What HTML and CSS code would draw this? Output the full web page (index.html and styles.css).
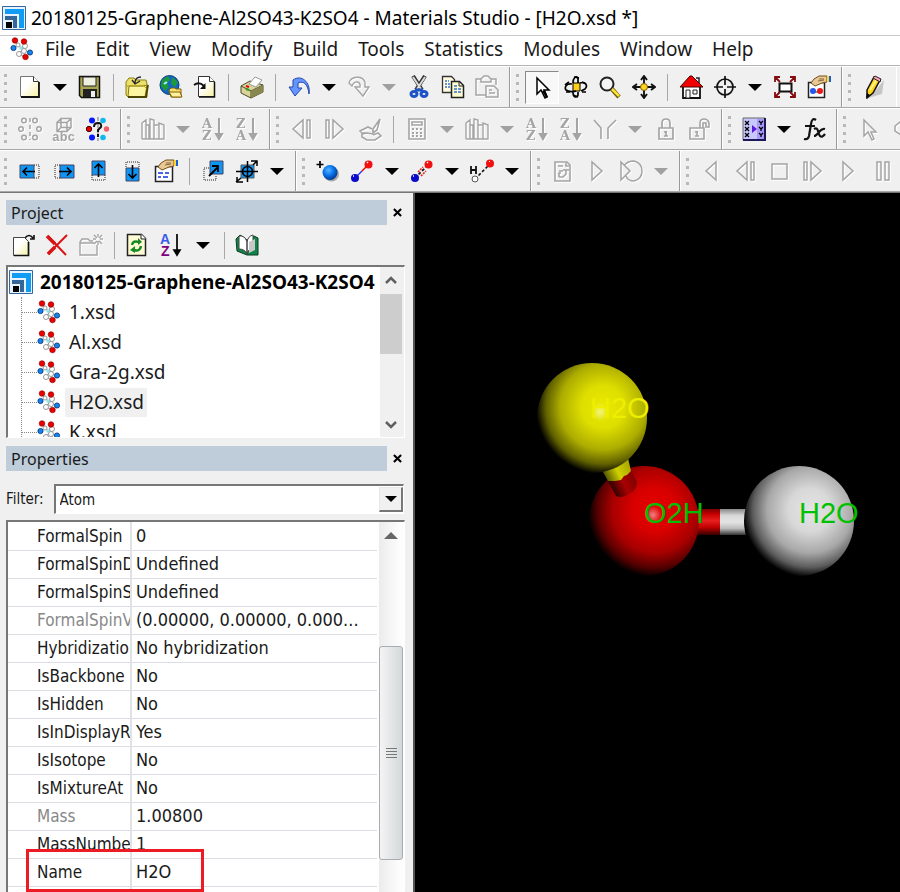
FILE: index.html
```html
<!DOCTYPE html>
<html lang="en">
<head>
<meta charset="utf-8">
<title>Materials Studio</title>
<link rel="stylesheet" href="styles.css">
</head>
<body>
<svg class="sprite" aria-hidden="true">
  <defs>
    <linearGradient id="paper" x1="0" y1="0" x2="1" y2="1"><stop offset=".4" stop-color="#fff"/><stop offset="1" stop-color="#f6f0a0"/></linearGradient>
    <radialGradient id="ball-blue" cx=".4" cy=".35" r=".65"><stop offset="0" stop-color="#5ab4ff"/><stop offset=".5" stop-color="#0a78f0"/><stop offset="1" stop-color="#003a90"/></radialGradient>
    <symbol id="logo" viewBox="0 0 24 24"><path d="M.5.5h23v23H.5z" fill="#e8f2fa" stroke="#33669c"/><path d="M3 3h19v19h-5V8H3z" fill="#109cf4"/><path d="M3 10h12v12h-4v-8H3z" fill="#336699"/><path d="M4 16h6v6H4z" fill="#000"/></symbol>
    <symbol id="molecule" viewBox="0 0 24 24"><path d="M5 4l3 4 5 4 6 4M14 5l-2 8-4 4 7 3" stroke="#999" fill="none"/><g fill="#fff" stroke="#999"><circle cx="8" cy="8" r="2"/><circle cx="15" cy="9" r="2.500"/><circle cx="14" cy="14" r="2.500"/><circle cx="9" cy="17" r="2.500"/></g><circle cx="11" cy="11" r="1.800" fill="#8ce4ee"/><g fill="#e80000" stroke="#800" stroke-width=".6"><circle cx="5" cy="3.500" r="2.800"/><circle cx="14" cy="4.500" r="2.800"/><circle cx="15.500" cy="20" r="2.800"/></g><g fill="#1484ee" stroke="#023070" stroke-width=".8"><circle cx="3.500" cy="11" r="2.600"/><circle cx="20" cy="15.500" r="2.600"/></g></symbol>
    <symbol id="new" viewBox="0 0 24 24"><path d="M2.500 1.500h13l5 5v15h-18z" fill="url(#paper)" stroke="#777"/><path d="M15.500 1.500v5h5" fill="#fff" stroke="#333"/><path d="M21 7v15H3" fill="none" stroke="#111" stroke-width="1.800"/></symbol>
    <symbol id="save" viewBox="0 0 24 24"><path d="M1.500 1.500h20v21h-18l-2-2z" fill="#a8a450" stroke="#111" stroke-width="1.500"/><path d="M5 2h13v9H5z" fill="#eef0e0" stroke="#222"/><path d="M5 14h14v8H5z" fill="#222"/><path d="M13 16h4v6h-4z" fill="#eee"/></symbol>
    <symbol id="open" viewBox="0 0 24 24"><path d="M1 7l3-4h5l2 2h10l1 4v13H3L1 20z" fill="#ece168" stroke="#8a7c10"/><path d="M4 11h14l4-1-2 12H3z" fill="#fbf4a0" stroke="#8a7c10"/><path d="M1 11h18l3 3" fill="none" stroke="#b0a020"/><path d="M3 22h18l2-12" fill="none" stroke="#4c4400" stroke-width="1.800"/><path d="M16 2q-6 0-6 6M7 5l3 4 5-3" fill="none" stroke="#222" stroke-width="1.300"/></symbol>
    <symbol id="globe" viewBox="0 0 24 24"><circle cx="10.500" cy="10" r="9.500" fill="#1464c8" stroke="#064070"/><path d="M3 5l6-4 2 4-3 3 2 4-4 4-4-5zM13 2l6 5-3 5-4-3zM9 15l4 0-2 4z" fill="#1c9a3a"/><path d="M5 9l3-2" stroke="#b8ecff" stroke-width="2"/><path d="M10 15l2-2h4l1 1h5v8H12z" fill="#f8e070" stroke="#806000"/><path d="M10 17h11l2 5H13z" fill="#fff0a0" stroke="#806000"/></symbol>
    <symbol id="import" viewBox="0 0 24 24"><path d="M5.500 1.500h11l5 5v15h-16z" fill="url(#paper)" stroke="#333"/><path d="M16.500 1.500v5h5" fill="#fff" stroke="#333"/><path d="M21.500 7v15H6" fill="none" stroke="#111" stroke-width="1.500"/><path d="M1 10q5-4 10 1" fill="none" stroke="#111" stroke-width="1.800"/><path d="M12.500 8v6H7z" fill="#111"/></symbol>
    <symbol id="print" viewBox="0 0 24 24"><path d="M1 11l9-5 13 4v7l-12 6-10-5z" fill="#d8d39a" stroke="#4e4b25"/><path d="M1 11l10 5 12-6M11 16v7" fill="none" stroke="#4e4b25"/><path d="M11 16l12-6v7l-12 6z" fill="#8a8650"/><path d="M9 9l6-7 7 3-6 7z" fill="#fff" stroke="#999"/><path d="M6 11l3 1" stroke="#e00" stroke-width="2"/><path d="M6 14l3 1" stroke="#17a317" stroke-width="2"/></symbol>
    <symbol id="undo" viewBox="0 0 24 24"><path d="M22 19C24 7 14-1 6 5v7H2l6 9 7-8h-4V8c6-3 10 2 11 11z" fill="#6596ff" stroke="#2348ad"/></symbol>
    <symbol id="redo" viewBox="0 0 24 24"><path d="M2 8C4 1 15 0 18 7v5h4l-6 9-8-9h5C14 7 8 4 5 11z" fill="none" stroke="#a4a4a4" stroke-width="1.400"/></symbol>
    <symbol id="cut" viewBox="0 0 24 24"><path d="M6 1l9 14M18 1L9 15" stroke="#333" stroke-width="4"/><path d="M6 2l8 12M18 2l-8 12" stroke="#ddd" stroke-width="2"/><g fill="none" stroke="#1c54c8" stroke-width="3"><ellipse cx="7" cy="19" rx="3" ry="2.500"/><ellipse cx="17" cy="19" rx="3" ry="2.500"/><path d="M8 15h8"/></g></symbol>
    <symbol id="copy" viewBox="0 0 24 24"><path d="M1.500 1.500h9l3 3v13h-12z" fill="#fffbe0" stroke="#333" stroke-width="1.300"/><path d="M4 6h4M4 9h6M4 12h6" stroke="#3570d0" stroke-width="1.500" stroke-dasharray="2 1"/><path d="M10.500 6.500h8l4 4v12h-12z" fill="#fffbd0" stroke="#222" stroke-width="1.500"/><path d="M13 11h4M13 14h7M13 17h7" stroke="#3570d0" stroke-width="1.500" stroke-dasharray="3 1"/><path d="M18 7v4h4" fill="none" stroke="#222"/></symbol>
    <symbol id="paste" viewBox="0 0 24 24"><g fill="none" stroke="#a4a4a4" stroke-width="1.500"><path d="M11 20H1V4h5l3-3h4l3 3h5v6M6 3v4h10V3M11 11h8l4 4v7H11zM14 15h3M14 18h6"/></g></symbol>
    <symbol id="pointer" viewBox="0 0 24 24"><path d="M7 3v16l4-4 4 8 2-1-3-7h5z" fill="#fff" stroke="#000" stroke-width="1.500"/><path d="M12 16l4 7 2-1-3-7z" fill="#000"/></symbol>
    <symbol id="rotate" viewBox="0 0 24 24"><path d="M9 8h7v8H9z" fill="#ffce18" stroke="#000"/><g fill="none" stroke="#000" stroke-width="1.700"><path d="M9 8c0-5 3-8 5-5v5M9 17c0 6 4 6 5 3v-3M8 9c-5-1-8 3-6 6 3 2 8 2 10 1M16 8c6-2 8 3 5 6l-4 2"/><path d="M1 10l4-3M10 2l5 1M22 9l-4-2M9 20l5 2M2 17h4M18 17h4"/></g></symbol>
    <symbol id="zoom" viewBox="0 0 24 24"><circle cx="9" cy="9" r="6.500" fill="#f4f4f4" stroke="#222" stroke-width="2"/><path d="M14 14l7 8" stroke="#6c5c00" stroke-width="4.500"/><path d="M14 14l7 7" stroke="#ffe23c" stroke-width="2.500"/></symbol>
    <symbol id="move" viewBox="0 0 24 24"><path d="M12 1v22M1 12h22M9 5l3-4 3 4M9 19l3 4 3-4M5 9l-4 3 4 3M19 9l4 3-4 3" fill="none" stroke="#111" stroke-width="1.900"/><circle cx="12" cy="12" r="3.500" fill="#ffd41c" stroke="#7c5b00"/></symbol>
    <symbol id="home" viewBox="0 0 24 24"><path d="M4 10h17v13H4z" fill="#fff" stroke="#111" stroke-width="1.800"/><path d="M1 12L11 1h2l11 11z" fill="#f00000" stroke="#400"/><path d="M17 3h3v5" stroke="#222" fill="none" stroke-width="1.500"/><path d="M7 15h4v8H7zM14 15h4v4h-4z" fill="#fff" stroke="#222"/></symbol>
    <symbol id="target" viewBox="0 0 24 24"><circle cx="12" cy="12" r="8" fill="none" stroke="#111" stroke-width="1.700"/><path d="M12 1v9M12 14v9M1 12h9M14 12h9" stroke="#111" stroke-width="1.700"/></symbol>
    <symbol id="fit" viewBox="0 0 24 24"><path d="M6.500 8.500h12v8h-12z" fill="#fff" stroke="#111" stroke-width="2"/><path d="M2 7V2h5M2 2l5 5M17 2h5v5M22 2l-5 5M2 17v5h5M2 22l5-5M17 22h5v-5M22 22l-5-5" fill="none" stroke="#840c10" stroke-width="1.800"/></symbol>
    <symbol id="hand" viewBox="0 0 24 24"><path d="M4 8l3-4 5-3h8v6l-5 1-7 3z" fill="#e8c894" stroke="#75501c"/><path d="M12 4l5 0M11 6l6-1" stroke="#8d6a38"/><path d="M20 1h2v6h-2z" fill="#ffd52e"/><path d="M22 1h2v6h-2z" fill="#1560e0"/></symbol>
    <symbol id="display-style" viewBox="0 0 24 24"><path d="M1.500 7.500h16v15h-16z" fill="#fff" stroke="#222" stroke-width="1.500"/><path d="M5 17h9" stroke="#222"/><circle cx="6" cy="16" r="3" fill="#2458e8"/><circle cx="13" cy="16" r="3" fill="#e81818"/><use href="#hand"/></symbol>
    <symbol id="props" viewBox="0 0 24 24"><path d="M1.500 7.500h17v15h-17z" fill="#fff" stroke="#222" stroke-width="1.500"/><path d="M4 14h5M11 14h4M4 18h3M9 18h5" stroke="#1030e0" stroke-width="1.700"/><use href="#hand"/></symbol>
    <symbol id="pencil" viewBox="0 0 24 24"><path d="M6 23l3-2L22 5l-2 14z" fill="#aaa" opacity=".6"/><path d="M5 15L12 2l6 3-7 13-6 5z" fill="#ffd51c" stroke="#111" stroke-width="1.500"/><path d="M8 15l7-11" stroke="#fff38a" stroke-width="2"/><path d="M11 3l2-2 6 3-1 3z" fill="#ff9cc0" stroke="#222"/><path d="M4 23l1-5 3 2z" fill="#000"/></symbol>
    <symbol id="atoms" viewBox="0 0 24 24"><g fill="none" stroke="#a4a4a4" stroke-width="1.500"><circle cx="6" cy="3.500" r="2.300"/><circle cx="17" cy="3.500" r="2.300"/><circle cx="3" cy="12" r="2.300"/><circle cx="21" cy="12" r="2.300"/><circle cx="6" cy="20.500" r="2.300"/><circle cx="17" cy="20.500" r="2.300"/><path d="M12 1v22" stroke-dasharray="4 3"/></g></symbol>
    <symbol id="box-abc" viewBox="0 0 24 24"><g fill="none" stroke="#a4a4a4" stroke-width="1.500"><path d="M5 5.500h10v9H5zM9 1.500h10v9H9zM5 5.500l4-4M15 5.500l4-4M15 14.500l4-4M5 14.500l4-4"/></g><text x="0" y="24" font-family="Liberation Mono, monospace" font-size="13" font-weight="700" fill="#a4a4a4">abc</text></symbol>
    <symbol id="atoms-ask" viewBox="0 0 24 24"><path d="M12 0v24" stroke="#777" stroke-dasharray="4 3"/><g fill="#0818ff"><circle cx="6" cy="3.500" r="3"/><circle cx="6" cy="20.500" r="3"/></g><g fill="#10b8f0"><circle cx="17" cy="3.500" r="2.800"/><circle cx="17" cy="20.500" r="2.800"/></g><circle cx="3" cy="12" r="2.700" fill="#e80000" stroke="#400"/><circle cx="20.500" cy="12" r="2.700" fill="#f06068"/><path d="M8 10q0-4 4-4t3 4l-3 3v2M12 17v3" fill="none" stroke="#111" stroke-width="2"/></symbol>
    <symbol id="chart" viewBox="0 0 24 24"><path d="M1 22V6l4-3v19M5 8h3v14M9 22V2l4 1v19M9 22V9M13 8h5v14M18 22V6l5 2v14H1" fill="none" stroke="#a4a4a4" stroke-width="1.400"/></symbol>
    <symbol id="sort-az" viewBox="0 0 24 24"><g font-family="DejaVu Serif, serif" font-size="13" font-weight="700"><text class="letter" x="1" y="11">A</text><text class="letter" x="1" y="23">Z</text></g><path class="shaft" d="M18 1v20M15 17l3 5 3-5z"/></symbol>
    <symbol id="sort-za" viewBox="0 0 24 24"><g font-family="DejaVu Serif, serif" font-size="13" font-weight="700"><text class="letter" x="1" y="11">Z</text><text class="letter" x="1" y="23">A</text></g><path class="shaft" d="M18 1v20M15 17l3 5 3-5z"/></symbol>
    <symbol id="sort-tree" viewBox="0 0 24 24"><g font-family="Liberation Sans, sans-serif" font-size="14" font-weight="700"><text x="1" y="11" fill="#3c5ce8">A</text><text x="2" y="23" fill="#800080">Z</text></g><path d="M18 1v20M15 17l3 5 3-5z" fill="#000" stroke="#000" stroke-width="1.700"/></symbol>
    <symbol id="step-back" viewBox="0 0 24 24"><path d="M13 3v18L3 12zM17 3h3v18h-3z" fill="none" stroke="#a4a4a4" stroke-width="1.500"/></symbol>
    <symbol id="step-fwd" viewBox="0 0 24 24"><path d="M9 3v18l10-9zM2 3h3v18H2z" fill="none" stroke="#a4a4a4" stroke-width="1.500"/></symbol>
    <symbol id="play" viewBox="0 0 24 24"><path d="M7 3v18l10-9z" fill="none" stroke="#a4a4a4" stroke-width="1.500"/></symbol>
    <symbol id="play-back" viewBox="0 0 24 24"><path d="M16 3v18L6 12z" fill="none" stroke="#a4a4a4" stroke-width="1.500"/></symbol>
    <symbol id="stop" viewBox="0 0 24 24"><path d="M4 5h15v15H4z" fill="none" stroke="#a4a4a4" stroke-width="1.500"/></symbol>
    <symbol id="pause" viewBox="0 0 24 24"><path d="M7 3h4v18H7zM15 3h4v18h-4z" fill="none" stroke="#a4a4a4" stroke-width="1.500"/></symbol>
    <symbol id="sketch" viewBox="0 0 24 24"><path d="M22 2l-7 10v4l4-3 3-11zM14 12l-4-2-8 4 2 2h5l-5 1v3l5 3h8l6-4-3-3-5 2M9 16l6 1" fill="none" stroke="#a4a4a4" stroke-width="1.600"/></symbol>
    <symbol id="calc" viewBox="0 0 24 24"><path d="M4 2h16v20H4zM7 5h10v3H7z" fill="none" stroke="#a4a4a4" stroke-width="1.600"/><path d="M7 12h10M7 16h10M7 19h10" stroke="#a4a4a4" stroke-width="2" stroke-dasharray="2 2"/></symbol>
    <symbol id="fork" viewBox="0 0 24 24"><path d="M1 3l7 8v11M23 3l-8 8v11" fill="none" stroke="#a4a4a4" stroke-width="1.600"/></symbol>
    <symbol id="lock" viewBox="0 0 24 24"><path d="M6 11h14v11H6zM9 11V6q0-4 4-4t4 4v5M13 14v5M11 15h3M11 19h4" fill="none" stroke="#a4a4a4" stroke-width="1.700"/></symbol>
    <symbol id="unlock" viewBox="0 0 24 24"><path d="M3 11h14v11H3zM13 11V6q0-4 4-4t5 4v4h-3V6h-3v5M10 14v5M8 15h3M8 19h4" fill="none" stroke="#a4a4a4" stroke-width="1.600"/></symbol>
    <symbol id="matrix" viewBox="0 0 24 24"><path d="M1 1h22v22H1z" fill="#c8c8ff" stroke="#666"/><path d="M15 2h7v20h-7z" fill="#a898f8"/><path d="M1 23h22V1" fill="none" stroke="#1c1858" stroke-width="2"/><path d="M10 8v8l5-4z" fill="#5a18d8"/><path d="M3 4l4 4M7 4L3 8M3 10l4 4M7 10l-4 4M3 16l4 4M7 16l-4 4M17 4l2 2 2-2M19 6v2M17 10l2 2 2-2M19 12v2M17 16l2 2 2-2M19 18v2" stroke="#000" fill="none" stroke-width="1.300"/></symbol>
    <symbol id="fx" viewBox="0 0 24 24"><path d="M14 3q-4-3-5 4L7 19q-1 4-5 3M3 9h10" fill="none" stroke="#111" stroke-width="2.200"/><path d="M12 12q3-2 4 2t2 5q2 2 5-2M23 12q-3-1-6 3t-5 4" fill="none" stroke="#111" stroke-width="2.200"/></symbol>
    <symbol id="pointer-off" viewBox="0 0 24 24"><path d="M7 3v16l4-4 4 8 2-1-3-7h5z" fill="none" stroke="#a4a4a4" stroke-width="1.500"/></symbol>
    <symbol id="lasso" viewBox="0 0 24 24"><path d="M23 5H9l-5 4v5l6 4h13" fill="none" stroke="#a4a4a4" stroke-width="1.500"/></symbol>
    <symbol id="left" viewBox="0 0 24 24"><path d="M2 6h14v13H2z" fill="#0e96f5" stroke="#446"/><path d="M16 6h5v13h-5" fill="none" stroke="#222" stroke-dasharray="1 1"/><path d="M17 12.500H5M9 8.500l-4 4 4 4" fill="none" stroke="#000" stroke-width="1.600"/></symbol>
    <symbol id="right" viewBox="0 0 24 24"><path d="M8 6h14v13H8z" fill="#0e96f5" stroke="#446"/><path d="M8 6H3v13h5" fill="none" stroke="#222" stroke-dasharray="1 1"/><path d="M7 12.500h12M15 8.500l4 4-4 4" fill="none" stroke="#000" stroke-width="1.600"/></symbol>
    <symbol id="up" viewBox="0 0 24 24"><path d="M6 2h13v14H6z" fill="#0e96f5" stroke="#446"/><path d="M6 16v5h13v-5" fill="none" stroke="#222" stroke-dasharray="1 1"/><path d="M12.500 18V5M8.500 9l4-4 4 4" fill="none" stroke="#000" stroke-width="1.600"/></symbol>
    <symbol id="down" viewBox="0 0 24 24"><path d="M6 9h13v13H6z" fill="#0e96f5" stroke="#446"/><path d="M6 8V3h13v5" fill="none" stroke="#222" stroke-dasharray="1 1"/><path d="M12.500 6v13M8.500 15l4 4 4-4" fill="none" stroke="#000" stroke-width="1.600"/></symbol>
    <symbol id="expand" viewBox="0 0 24 24"><path d="M9 2h13v13H9z" fill="#0e96f5" stroke="#446"/><path d="M8 9H3v12h12v-5" fill="none" stroke="#222" stroke-dasharray="1 1"/><path d="M8 17l9-9M11 7h6v6" fill="none" stroke="#000" stroke-width="1.800"/></symbol>
    <symbol id="recenter" viewBox="0 0 24 24"><path d="M6 6h13v13H6z" fill="#0e96f5" stroke="#555"/><circle cx="12.500" cy="12.500" r="5" fill="none" stroke="#000" stroke-width="1.600"/><path d="M12.500 2v21M1 12.500h22M16 2h6v5M18 6l4-4M2 18v5h6M1 23l5-4" fill="none" stroke="#000" stroke-width="1.500"/></symbol>
    <symbol id="add-atom" viewBox="0 0 24 24"><circle cx="15.500" cy="15" r="7.500" fill="#888" opacity=".7"/><circle cx="14" cy="13.500" r="7.500" fill="url(#ball-blue)"/><path d="M4 2v7M.5 5.500h7" stroke="#000" stroke-width="1.700"/></symbol>
    <symbol id="bond" viewBox="0 0 24 24"><path d="M5 19l7-7" stroke="#33f" stroke-width="1.500"/><path d="M12 12l7-7" stroke="#e00" stroke-width="1.500"/><circle cx="5" cy="19" r="4" fill="#0a0ac8"/><circle cx="18.500" cy="5.500" r="4" fill="#f01010"/><path d="M17 4l1-1M3 17l1 0" stroke="#fff" stroke-width="1.500"/></symbol>
    <symbol id="bond-dash" viewBox="0 0 24 24"><path d="M5 19L19 5" stroke="#111" stroke-width="1.700" stroke-dasharray="3 2"/><path d="M8 13l5-5M11 17l5-5" stroke="#f02020" stroke-width="1.600" stroke-dasharray="2 1"/><circle cx="5" cy="19" r="4" fill="#0a0ac8"/><circle cx="18.500" cy="5.500" r="4" fill="#f01010"/><path d="M17 4l1-1M3 17l1 0" stroke="#fff" stroke-width="1.500"/></symbol>
    <symbol id="hydrogen" viewBox="0 0 24 24"><path d="M5 20L20 5" stroke="#111" stroke-width="1.600" stroke-dasharray="3 2"/><path d="M1 7v8M6 7v8M1 11h5" stroke="#111" stroke-width="1.800"/><circle cx="5" cy="20" r="3" fill="#fff" stroke="#555"/><circle cx="20" cy="4.500" r="4" fill="#f01010"/><path d="M19 3l1-1" stroke="#fff"/></symbol>
    <symbol id="script" viewBox="0 0 24 24"><path d="M4 3h12l3 3v16H4zM7 7h5M12 11h6M8 12h4M8 18v-4l2 0M15 11v4l-3 3h-4M15 4v3h3" fill="none" stroke="#a4a4a4" stroke-width="1.600"/></symbol>
    <symbol id="run-at" viewBox="0 0 24 24"><path d="M2 3v18l9-9zM5 7q3-5 10-5 8 2 8 10t-8 10q-6 0-8-5" fill="none" stroke="#a4a4a4" stroke-width="1.500"/></symbol>
    <symbol id="new-file" viewBox="0 0 24 24"><path d="M2.500 4.500h11l4 4v14h-15z" fill="url(#paper)" stroke="#444"/><path d="M17.500 9v13.500H3" fill="none" stroke="#111" stroke-width="1.700"/><path d="M14 5q4-5 8 0M23 2v4h-4" fill="none" stroke="#111" stroke-width="1.600"/></symbol>
    <symbol id="delete" viewBox="0 0 24 24"><path d="M3 3l18 19M22 2L3 21" stroke="#d81414" stroke-width="2"/><path d="M2 3l8 8M3 21l7-7" stroke="#d81414" stroke-width="3.500"/></symbol>
    <symbol id="new-folder" viewBox="0 0 24 24"><path d="M14 8h-3l-2-2H3L1 9v13h17V12M1 10h14M19 1v3M19 8v4M14 6h3M21 6h3M15 2l3 3M23 2l-3 3M15 11l3-3M23 11l-3-3" fill="none" stroke="#a4a4a4" stroke-width="1.400"/></symbol>
    <symbol id="refresh" viewBox="0 0 24 24"><path d="M2.500 1.500h14l4 4v17h-18z" fill="#fffbd4" stroke="#222" stroke-width="1.500"/><path d="M16 1v5h5" fill="#fff" stroke="#222"/><path d="M7 12q1-5 7-3M16 13q-1 6-7 4" fill="none" stroke="#178a26" stroke-width="2.500"/><path d="M13 5v7l4-3zM10 13v7l-5-3z" fill="#178a26"/></symbol>
    <symbol id="book" viewBox="0 0 24 24"><path d="M1 6l4-4 7 5 7-4 4 2v17H12L2 18z" fill="#12834a" stroke="#063d20"/><path d="M4 3q6-1 8 6v12q-2-5-8-5zM12 9q1-6 6-7v13q-5 1-6 6z" fill="#fff" stroke="#444"/><path d="M14 9l6-3v11l-6 3z" fill="#c8c8c8"/></symbol>
    <symbol id="close" viewBox="0 0 10 10"><path d="M1 1l8 8M9 1L1 9" stroke="#000" stroke-width="2.300"/></symbol>
    <symbol id="chev-up" viewBox="0 0 12 12"><path d="M1 8l5-5 5 5" fill="none" stroke="#606060" stroke-width="2.500"/></symbol>
    <symbol id="chev-down" viewBox="0 0 12 12"><path d="M1 4l5 5 5-5" fill="none" stroke="#606060" stroke-width="2.500"/></symbol>
  </defs>
</svg>

<header class="titlebar"><svg class="icon"><use href="#logo"/></svg><h1>20180125-Graphene-Al2SO43-K2SO4 - Materials Studio - [H2O.xsd *]</h1></header>

<nav class="menubar" aria-label="Main menu">
  <svg class="icon"><use href="#molecule"/></svg>
  <button>File</button><button>Edit</button><button>View</button><button>Modify</button><button>Build</button><button>Tools</button><button>Statistics</button><button>Modules</button><button>Window</button><button>Help</button>
</nav>

<div class="toolrow">
  <div class="toolbar" role="toolbar" aria-label="Standard">
    <i class="grip"></i>
    <button class="tool" aria-label="New"><svg class="icon"><use href="#new"/></svg></button><button class="drop" aria-label="New options"></button>
    <button class="tool" aria-label="Save"><svg class="icon"><use href="#save"/></svg></button><i class="sep"></i>
    <button class="tool" aria-label="Open"><svg class="icon"><use href="#open"/></svg></button>
    <button class="tool" aria-label="Open from web"><svg class="icon"><use href="#globe"/></svg></button>
    <button class="tool" aria-label="Import"><svg class="icon"><use href="#import"/></svg></button><i class="sep"></i>
    <button class="tool" aria-label="Print"><svg class="icon"><use href="#print"/></svg></button><i class="sep"></i>
    <button class="tool" aria-label="Undo"><svg class="icon"><use href="#undo"/></svg></button><button class="drop" aria-label="Undo list"></button>
    <button class="tool off" aria-label="Redo"><svg class="icon"><use href="#redo"/></svg></button><button class="drop off" aria-label="Redo list"></button>
    <button class="tool" aria-label="Cut"><svg class="icon"><use href="#cut"/></svg></button>
    <button class="tool" aria-label="Copy"><svg class="icon"><use href="#copy"/></svg></button>
    <button class="tool off" aria-label="Paste"><svg class="icon"><use href="#paste"/></svg></button>
  </div>
  <div class="toolbar" role="toolbar" aria-label="3D viewer">
    <i class="grip"></i>
    <button class="tool pressed" aria-label="Select"><svg class="icon"><use href="#pointer"/></svg></button>
    <button class="tool" aria-label="Rotate"><svg class="icon"><use href="#rotate"/></svg></button>
    <button class="tool" aria-label="Zoom"><svg class="icon"><use href="#zoom"/></svg></button>
    <button class="tool" aria-label="Translate"><svg class="icon"><use href="#move"/></svg></button><i class="sep"></i>
    <button class="tool" aria-label="Reset view"><svg class="icon"><use href="#home"/></svg></button>
    <button class="tool" aria-label="Center"><svg class="icon"><use href="#target"/></svg></button><button class="drop" aria-label="Center options"></button>
    <button class="tool" aria-label="Fit to view"><svg class="icon"><use href="#fit"/></svg></button>
    <button class="tool" aria-label="Display style"><svg class="icon"><use href="#display-style"/></svg></button>
  </div>
  <div class="toolbar" role="toolbar" aria-label="Sketch">
    <i class="grip"></i>
    <button class="tool" aria-label="Sketch atom"><svg class="icon"><use href="#pencil"/></svg></button>
  </div>
</div>

<div class="toolrow">
  <div class="toolbar" role="toolbar" aria-label="Symmetry">
    <i class="grip"></i>
    <button class="tool off" aria-label="Find symmetry"><svg class="icon"><use href="#atoms"/></svg></button>
    <button class="tool off" aria-label="Build crystal"><svg class="icon"><use href="#box-abc"/></svg></button>
    <button class="tool" aria-label="Show symmetry"><svg class="icon"><use href="#atoms-ask"/></svg></button>
  </div>
  <div class="toolbar" role="toolbar" aria-label="Chart">
    <i class="grip"></i>
    <button class="tool off" aria-label="Chart"><svg class="icon"><use href="#chart"/></svg></button><button class="drop off" aria-label="Chart options"></button>
    <button class="tool off" aria-label="Sort ascending"><svg class="icon"><use href="#sort-az"/></svg></button>
    <button class="tool off" aria-label="Sort descending"><svg class="icon"><use href="#sort-za"/></svg></button>
  </div>
  <div class="toolbar" role="toolbar" aria-label="Study table">
    <i class="grip"></i>
    <button class="tool off" aria-label="Previous"><svg class="icon"><use href="#step-back"/></svg></button>
    <button class="tool off" aria-label="Next"><svg class="icon"><use href="#step-fwd"/></svg></button>
    <button class="tool off" aria-label="Edit sketch"><svg class="icon"><use href="#sketch"/></svg></button><i class="sep"></i>
    <button class="tool off" aria-label="Calculate"><svg class="icon"><use href="#calc"/></svg></button><button class="drop off" aria-label="Calculate options"></button>
    <button class="tool off" aria-label="Plot"><svg class="icon"><use href="#chart"/></svg></button><button class="drop off" aria-label="Plot options"></button>
    <button class="tool off" aria-label="Sort up"><svg class="icon"><use href="#sort-az"/></svg></button>
    <button class="tool off" aria-label="Sort down"><svg class="icon"><use href="#sort-za"/></svg></button>
    <button class="tool off" aria-label="Filter rows"><svg class="icon"><use href="#fork"/></svg></button><button class="drop off" aria-label="Filter options"></button>
    <button class="tool off" aria-label="Lock"><svg class="icon"><use href="#lock"/></svg></button>
    <button class="tool off" aria-label="Unlock"><svg class="icon"><use href="#unlock"/></svg></button>
  </div>
  <div class="toolbar" role="toolbar" aria-label="Models">
    <i class="grip"></i>
    <button class="tool" aria-label="Models"><svg class="icon"><use href="#matrix"/></svg></button><button class="drop" aria-label="Model options"></button>
    <button class="tool" aria-label="Function"><svg class="icon"><use href="#fx"/></svg></button>
  </div>
  <div class="toolbar" role="toolbar" aria-label="Selection">
    <i class="grip"></i>
    <button class="tool off" aria-label="Pick"><svg class="icon"><use href="#pointer-off"/></svg></button>
    <button class="tool off" aria-label="Lasso"><svg class="icon"><use href="#lasso"/></svg></button>
  </div>
</div>

<div class="toolrow">
  <div class="toolbar" role="toolbar" aria-label="Movement">
    <i class="grip"></i>
    <button class="tool" aria-label="Left"><svg class="icon"><use href="#left"/></svg></button>
    <button class="tool" aria-label="Right"><svg class="icon"><use href="#right"/></svg></button>
    <button class="tool" aria-label="Up"><svg class="icon"><use href="#up"/></svg></button>
    <button class="tool" aria-label="Down"><svg class="icon"><use href="#down"/></svg></button>
    <button class="tool" aria-label="Movement settings"><svg class="icon"><use href="#props"/></svg></button><i class="sep"></i>
    <button class="tool" aria-label="Align onto view"><svg class="icon"><use href="#expand"/></svg></button>
    <button class="tool" aria-label="Recenter"><svg class="icon"><use href="#recenter"/></svg></button><button class="drop" aria-label="Recenter options"></button>
  </div>
  <div class="toolbar" role="toolbar" aria-label="Atoms and bonds">
    <i class="grip"></i>
    <button class="tool" aria-label="Add atom"><svg class="icon"><use href="#add-atom"/></svg></button>
    <button class="tool" aria-label="Bond"><svg class="icon"><use href="#bond"/></svg></button><button class="drop" aria-label="Bond options"></button>
    <button class="tool" aria-label="Partial bond"><svg class="icon"><use href="#bond-dash"/></svg></button><button class="drop" aria-label="Partial bond options"></button>
    <button class="tool" aria-label="Hydrogen bond"><svg class="icon"><use href="#hydrogen"/></svg></button><button class="drop" aria-label="Hydrogen bond options"></button>
  </div>
  <div class="toolbar" role="toolbar" aria-label="Scripting">
    <i class="grip"></i>
    <button class="tool off" aria-label="Script"><svg class="icon"><use href="#script"/></svg></button>
    <button class="tool off" aria-label="Run"><svg class="icon"><use href="#play"/></svg></button>
    <button class="tool off" aria-label="Run on server"><svg class="icon"><use href="#run-at"/></svg></button><button class="drop off" aria-label="Run options"></button>
  </div>
  <div class="toolbar" role="toolbar" aria-label="Animation">
    <i class="grip"></i>
    <button class="tool off" aria-label="Play backwards"><svg class="icon"><use href="#play-back"/></svg></button>
    <button class="tool off" aria-label="Step back"><svg class="icon"><use href="#step-back"/></svg></button>
    <button class="tool off" aria-label="Stop"><svg class="icon"><use href="#stop"/></svg></button>
    <button class="tool off" aria-label="Step forward"><svg class="icon"><use href="#step-fwd"/></svg></button>
    <button class="tool off" aria-label="Play"><svg class="icon"><use href="#play"/></svg></button>
    <button class="tool off" aria-label="Pause"><svg class="icon"><use href="#pause"/></svg></button>
  </div>
</div>

<main class="workspace">
  <aside class="dock">
    <section class="panel">
      <div class="panel-head"><h2>Project</h2><button class="close" aria-label="Close Project"><svg><use href="#close"/></svg></button></div>
      <div class="panel-tools">
        <button class="tool" aria-label="New document"><svg class="icon"><use href="#new-file"/></svg></button>
        <button class="tool" aria-label="Delete"><svg class="icon"><use href="#delete"/></svg></button>
        <button class="tool off" aria-label="New folder"><svg class="icon"><use href="#new-folder"/></svg></button><i class="sep"></i>
        <button class="tool" aria-label="Refresh"><svg class="icon"><use href="#refresh"/></svg></button>
        <button class="tool" aria-label="Sort"><svg class="icon"><use href="#sort-tree"/></svg></button><button class="drop" aria-label="Sort options"></button><i class="sep"></i>
        <button class="tool" aria-label="Help topics"><svg class="icon"><use href="#book"/></svg></button>
      </div>
      <div class="sunken tree">
        <div class="tree-list">
          <div class="root"><svg class="icon"><use href="#logo"/></svg><strong>20180125-Graphene-Al2SO43-K2SO4</strong></div>
          <ul>
            <li><svg class="icon"><use href="#molecule"/></svg><span>1.xsd</span></li>
            <li><svg class="icon"><use href="#molecule"/></svg><span>Al.xsd</span></li>
            <li><svg class="icon"><use href="#molecule"/></svg><span>Gra-2g.xsd</span></li>
            <li><svg class="icon"><use href="#molecule"/></svg><span class="selected">H2O.xsd</span></li>
            <li><svg class="icon"><use href="#molecule"/></svg><span>K.xsd</span></li>
          </ul>
        </div>
        <div class="scroll flat"><button aria-label="Scroll up"><svg><use href="#chev-up"/></svg></button><i class="thumb"></i><button class="end" aria-label="Scroll down"><svg><use href="#chev-down"/></svg></button></div>
      </div>
    </section>

    <section class="panel properties">
      <div class="panel-head"><h2>Properties</h2><button class="close" aria-label="Close Properties"><svg><use href="#close"/></svg></button></div>
      <div class="filter">
        <label for="filter">Filter:</label>
        <div class="combo"><select id="filter"><option>Atom</option></select><i class="combo-arrow"></i></div>
      </div>
      <div class="sunken grid">
        <table>
          <tbody>
            <tr><th>FormalSpin</th><td>0</td></tr>
            <tr><th>FormalSpinD</th><td>Undefined</td></tr>
            <tr><th>FormalSpinS</th><td>Undefined</td></tr>
            <tr><th class="readonly">FormalSpinV</th><td>(0.00000, 0.00000, 0.000...</td></tr>
            <tr><th>Hybridizatio</th><td>No hybridization</td></tr>
            <tr><th>IsBackbone</th><td>No</td></tr>
            <tr><th>IsHidden</th><td>No</td></tr>
            <tr><th>IsInDisplayR</th><td>Yes</td></tr>
            <tr><th>IsIsotope</th><td>No</td></tr>
            <tr><th>IsMixtureAt</th><td>No</td></tr>
            <tr><th class="readonly">Mass</th><td>1.00800</td></tr>
            <tr><th>MassNumbe</th><td>1</td></tr>
            <tr><th class="marked">Name</th><td>H2O</td></tr>
            <tr><th></th><td></td></tr>
          </tbody>
        </table>
        <div class="scroll glossy"><button aria-label="Scroll properties up"><i class="tri"></i></button><i class="thumb"><b></b></i></div>
      </div>
    </section>
  </aside>

  <section class="viewport" aria-label="3D view">
    <svg width="485" height="699" viewBox="415 193 485 699">
      <defs>
        <radialGradient id="yellow" cx=".6" cy=".4" r=".65"><stop offset="0" stop-color="#eaea00"/><stop offset=".3" stop-color="#dede00"/><stop offset=".6" stop-color="#acac00"/><stop offset=".8" stop-color="#606000"/><stop offset=".94" stop-color="#000"/></radialGradient>
        <radialGradient id="red" cx=".6" cy=".4" r=".65"><stop offset="0" stop-color="#e40000"/><stop offset=".3" stop-color="#da0000"/><stop offset=".6" stop-color="#a80000"/><stop offset=".8" stop-color="#580000"/><stop offset=".94" stop-color="#000"/></radialGradient>
        <radialGradient id="white" cx=".6" cy=".4" r=".65"><stop offset="0" stop-color="#e4e4e4"/><stop offset=".3" stop-color="#d8d8d8"/><stop offset=".6" stop-color="#a8a8a8"/><stop offset=".8" stop-color="#5c5c5c"/><stop offset=".94" stop-color="#000"/></radialGradient>
        <radialGradient id="shine"><stop offset="0" stop-color="#fff" stop-opacity=".5"/><stop offset="1" stop-color="#fff" stop-opacity="0"/></radialGradient>
        <linearGradient id="rod-red" x1="0" y1="0" x2="0" y2="1"><stop offset="0" stop-color="#700"/><stop offset=".2" stop-color="#c80000"/><stop offset=".45" stop-color="#e82020"/><stop offset=".7" stop-color="#c00000"/><stop offset="1" stop-color="#300"/></linearGradient>
        <linearGradient id="rod-white" x1="0" y1="0" x2="0" y2="1"><stop offset="0" stop-color="#888"/><stop offset=".25" stop-color="#d8d8d8"/><stop offset=".5" stop-color="#e4e4e4"/><stop offset=".75" stop-color="#bbb"/><stop offset="1" stop-color="#333"/></linearGradient>
        <linearGradient id="tilt-red" x1="609" y1="486" x2="636" y2="474" gradientUnits="userSpaceOnUse"><stop offset="0" stop-color="#200"/><stop offset=".5" stop-color="#a80000"/><stop offset="1" stop-color="#780000"/></linearGradient>
        <linearGradient id="tilt-yellow" x1="606" y1="478" x2="630" y2="466" gradientUnits="userSpaceOnUse"><stop offset="0" stop-color="#555500"/><stop offset=".5" stop-color="#d0d000"/><stop offset="1" stop-color="#a8a800"/></linearGradient>
      </defs>
      <path d="M690 509h30v26h-30z" fill="url(#rod-red)"/>
      <path d="M720 509h28v26h-28z" fill="url(#rod-white)"/>
      <circle cx="644" cy="521" r="55" fill="url(#red)"/>
      <circle cx="799" cy="521" r="55" fill="url(#white)"/>
      <path d="M607 479l22-13 8 16q0 8-8 12-8 5-13 2z" fill="url(#tilt-red)"/>
      <path d="M602 470l26-12 3 13-4 4-3 1-3 4-6 1-7 0z" fill="url(#tilt-yellow)"/>
      <circle cx="592" cy="418" r="55" fill="url(#yellow)"/>
      <circle cx="600" cy="412" r="9" fill="url(#shine)"/>
      <circle cx="653" cy="515" r="9" fill="url(#shine)"/>
      <g class="atom-label"><text x="590" y="418" fill="#eeee00">H2O</text><text x="644" y="523" fill="#00c000">O2H</text><text x="799" y="523" fill="#00c000">H2O</text></g>
    </svg>
  </section>
</main>
</body>
</html>
```

FILE: styles.css
```css
*, *::before, *::after { box-sizing: border-box; }

body {
  margin: 0;
  height: 100vh;
  display: flex;
  flex-direction: column;
  overflow: hidden;
  background: #f0f0f0;
  color: #1a1a1a;
  font-family: "Noto Sans", "Open Sans", sans-serif;
  font-size: 19px;
}

button {
  padding: 0;
  border: 0;
  background: none;
  color: inherit;
  font: inherit;
}

h1, h2, ul { margin: 0; padding: 0; font-weight: 400; }

.sprite { position: absolute; width: 0; height: 0; }
.icon { width: 24px; height: 24px; flex: none; display: block; }

.titlebar {
  display: flex;
  align-items: center;
  gap: 5px;
  flex: none;
  height: 35px;
  padding-left: 2px;
  background: #fff;
  color: #000;
}
.titlebar h1 { font-size: 19px; white-space: nowrap; }

.menubar {
  display: flex;
  align-items: center;
  gap: 20px;
  flex: none;
  height: 31px;
  padding: 0 0 3px 10px;
  border-top: 1px solid #c8c8c8;
  border-bottom: 1px solid #b4b4b4;
  background: #fff;
  white-space: nowrap;
}
.menubar .icon { margin-right: -9px; }

/* Tool bars */
.toolrow {
  display: flex;
  flex: none;
  height: 42px;
  overflow: hidden;
  border-top: 1px solid #fff;
  border-bottom: 1px solid #a8a8a8;
}
.toolbar {
  display: flex;
  align-items: center;
  flex: none;
  padding-right: 5px;
  border-right: 1px solid #999;
  box-shadow: 1px 0 #fff;
}
.toolbar + .toolbar { margin-left: 1px; }
.toolbar:last-child { border-right: 0; }
.grip { width: 14px; padding-left: 5px; flex: none; }
.toolbar:first-child .grip { width: 13px; padding-left: 4px; }
.grip::before {
  content: "";
  display: block;
  width: 3px;
  height: 27px;
  background: linear-gradient(#b8b8b8 3px, transparent 3px) 0 0 / 3px 8px;
}
.tool {
  display: flex;
  align-items: center;
  justify-content: center;
  flex: none;
  width: 34px;
  height: 33px;
}
.tool.off { filter: drop-shadow(1px 1px 0 #fff); }
.tool.pressed {
  background: #f8f8f8;
  border: 1px solid #fff;
  border-top-color: #888;
  border-left-color: #888;
}
.drop {
  display: flex;
  align-items: center;
  justify-content: center;
  flex: none;
  width: 26px;
  height: 33px;
}
.drop::before {
  content: "";
  border: 7px solid transparent;
  border-top-color: #000;
  border-bottom: 0;
}
.drop.off::before { border-top-color: #a0a0a0; }
.sep {
  flex: none;
  width: 1px;
  height: 27px;
  margin: 0 6px;
  background: #a8a8a8;
}
.letter, .shaft { fill: #a4a4a4; }
.shaft { stroke: #a4a4a4; stroke-width: 2; }

/* Workspace */
.workspace {
  flex: 1;
  min-height: 0;
  display: grid;
  grid-template-columns: 415px 1fr;
  border-top: 1px solid #777;
}
.dock {
  min-height: 0;
  display: flex;
  flex-direction: column;
  gap: 8px;
  padding: 7px 6px 0 6px;
  border-right: 2px solid #555;
  overflow: hidden;
}
.panel { flex: none; }
.panel-head { display: flex; align-items: center; height: 25px; }
.panel-head h2 {
  flex: 1;
  height: 25px;
  padding-left: 5px;
  background: #bfcddb;
  font-size: 16px;
  line-height: 26px;
}
.close { display: flex; align-items: center; justify-content: center; width: 20px; height: 25px; }
.close svg { width: 9px; height: 9px; }
.panel-tools { display: flex; align-items: center; height: 40px; }
.panel-tools .drop { width: 30px; }
.panel-tools .sep { margin: 0 5px 0 6px; }

.sunken {
  display: flex;
  width: 399px;
  border: 1px solid #fff;
  border-top: 2px solid #777;
  border-left: 2px solid #777;
  background: #fff;
}
.tree { height: 173px; }
.tree-list { flex: 1; overflow: hidden; padding-left: 1px; white-space: nowrap; }
.root { display: flex; align-items: center; gap: 7px; height: 30px; color: #000; }
.tree ul { margin-left: 12px; border-left: 1px dotted #888; list-style: none; }
.tree li { display: flex; align-items: center; height: 30px; }
.tree li::before { content: ""; width: 15px; border-top: 1px dotted #888; }
.tree li span { margin-left: 4px; padding: 0 3px 0 4px; line-height: 29px; }
.tree .selected { background: #f0f0f0; }

.scroll { display: flex; flex-direction: column; flex: none; width: 24px; }
.scroll.flat { background: #f0f0f0; padding-right: 2px; }
.scroll button { height: 27px; display: flex; align-items: center; justify-content: center; }
.scroll svg { width: 12px; height: 12px; }
.flat .thumb { height: 60px; background: #cdcdcd; }
.scroll .end { margin-top: auto; }

.properties { flex: 1; min-height: 0; display: flex; flex-direction: column; }
.filter {
  display: flex;
  align-items: center;
  gap: 10px;
  flex: none;
  width: 398px;
  padding: 13px 0 6px;
  font-family: "DejaVu Sans Condensed", "DejaVu Sans", sans-serif;
  font-size: 15px;
}
.combo { position: relative; flex: 1; }
.combo select {
  appearance: none;
  display: block;
  width: 100%;
  height: 30px;
  padding: 0 4px;
  border: 1px solid #fff;
  border-top: 2px solid #777;
  border-left: 2px solid #777;
  border-radius: 0;
  background: #fff;
  color: inherit;
  font: inherit;
}
.combo-arrow {
  position: absolute;
  top: 3px;
  right: 1px;
  width: 24px;
  height: 25px;
  display: flex;
  align-items: center;
  justify-content: center;
  background: #f0f0f0;
  border: 1px solid #e8e8e8;
  border-right: 2px solid #777;
  border-bottom: 2px solid #777;
  pointer-events: none;
}
.combo-arrow::before { content: ""; border: 6px solid transparent; border-top-color: #000; border-bottom: 0; }

.grid { flex: 1; min-height: 0; overflow: hidden; border-bottom: 0; }
.grid table {
  flex: none;
  width: 369px;
  height: 0;
  border-collapse: collapse;
  table-layout: fixed;
  font-family: "DejaVu Sans Condensed", "DejaVu Sans", sans-serif;
}
.grid th, .grid td {
  height: 28px;
  padding: 0 0 0 4px;
  border-bottom: 1px solid #dadde2;
  overflow: hidden;
  text-align: left;
  font-size: 18px;
  font-weight: 400;
  line-height: 26px;
  white-space: nowrap;
}
.grid th {
  width: 123px;
  padding-left: 29px;
  border-right: 2px solid #e0e2e6;
  font-size: 17px;
}
.grid .readonly { color: #888; }

/* Callout around the Name row */
.grid .marked { position: relative; overflow: visible; }
.marked::after {
  content: "";
  position: absolute;
  left: 18px;
  top: -10px;
  width: 178px;
  height: 43px;
  border: 3px solid #ed1c24;
}

.glossy { margin-left: 2px; background: linear-gradient(90deg, #ececec, #fff); }
.tri { border: 7px solid transparent; border-bottom-color: #666; border-top: 0; }
.glossy .thumb {
  display: flex;
  align-items: center;
  justify-content: center;
  height: 214px;
  margin-top: 97px;
  border: 1px solid #a8acb0;
  border-radius: 3px;
  background: linear-gradient(90deg, #f4f4f4, #d4d8da);
}
.glossy b {
  width: 11px;
  height: 11px;
  background: repeating-linear-gradient(#777 0 1px, transparent 1px 3px);
}

.viewport { min-width: 0; background: #000; overflow: hidden; }
.viewport svg { display: block; }
.atom-label { font-family: "Liberation Sans", Arial, sans-serif; font-size: 29px; }
```
